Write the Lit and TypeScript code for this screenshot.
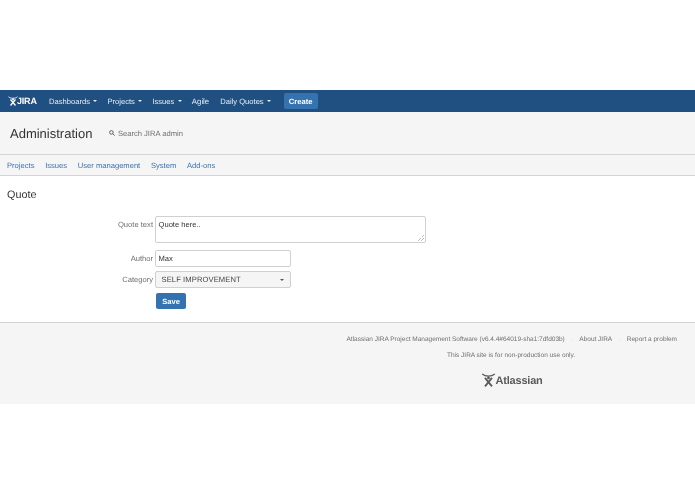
import { LitElement, html, css, svg } from "lit";
import { customElement } from "lit/decorators.js";

const caret = html`<span class="caret"></span>`;
const mark = (c: string) => svg`<svg class="mark" viewBox="0 0 20 20" fill="none" stroke="${c}">
  <path d="M1 1.500 C4 4 6 4.500 10 4.500 C14 4.500 16 4 19 1.500" stroke-width="1.800"/>
  <path d="M5 7 L15 19 M15 7 L5 19" stroke-width="2.600"/>
  <circle cx="10" cy="7" r="2" fill="${c}" stroke="none"/>
</svg>`;

@customElement("app-root")
export class AppRoot extends LitElement {
  static styles = css`
    :host { display: block; width: 695px; height: 494px; background: #fff; font-family: "Liberation Sans", Arial, sans-serif; color: #333; font-size: 7.6px; overflow: hidden; text-rendering: geometricPrecision; filter: blur(0.25px); }
    .spacer { height: 90px; }
    header { height: 22px; background: #205081; color: #fff; display: flex; align-items: center; padding-left: 7.500px; box-sizing: border-box; }
    .logo { display: flex; align-items: center; width: 41.500px; font-size: 9px; font-weight: 700; letter-spacing: -0.2px; }
    .logo .mark { width: 10px; height: 12px; margin: -1px -0.500px 0 0; }
    .navitem { display: flex; align-items: center; margin-right: 10px; color: #e8edf3; }
    .navitem.plain { font-size: 7.800px; margin-right: 11px; }
    .caret { display: inline-block; width: 0; height: 0; border-left: 2px solid transparent; border-right: 2px solid transparent; border-top: 2px solid currentColor; margin-left: 3.500px; }
    .create { margin-left: 2.500px; height: 16px; width: 34px; display: flex; align-items: center; justify-content: center; border-radius: 2px; background: #3572b0; font-weight: 700; color: #fff; }
    .admin { height: 42px; background: #f5f5f5; border-bottom: 1px solid #d4d4d4; display: flex; align-items: center; padding: 0 10px; }
    h1 { font-size: 13px; font-weight: 400; margin: 0 16.500px 0 0; color: #333; }
    .search { display: flex; align-items: center; gap: 3px; color: #707070; font-size: 7.600px; }
    .search svg { width: 6px; height: 6px; }
    .tabs { height: 20px; background: #f5f5f5; border-bottom: 1px solid #d4d4d4; display: flex; align-items: center; padding-left: 7px; gap: 10.700px; color: #3b73af; }
    main { height: 146px; box-sizing: border-box; padding: 13px 0 0 7px; }
    h2 { font-size: 10.800px; font-weight: 400; margin: 0; line-height: 13px; color: #333; }
    form { margin: 14px 0 0 -7px; display: grid; grid-template-columns: 153px auto; column-gap: 2px; row-gap: 7px; justify-content: start; align-items: start; }
    label { text-align: right; color: #707070; line-height: 15px; }
    .lab-ta { margin-top: 0.500px; }
    .ta { box-sizing: border-box; width: 271px; height: 27px; border: 1px solid #d0d0d0; border-radius: 2px; font: inherit; padding: 2.500px 2.500px; color: #333; resize: none; display: block; line-height: 9px; outline: none; background: linear-gradient(135deg, transparent 50%, #bbb 50%, #bbb 58%, transparent 58%, transparent 72%, #bbb 72%, #bbb 82%, transparent 82%) no-repeat right 1px bottom 1px / 6px 6px, #fff; }
    .in { box-sizing: border-box; width: 135.500px; height: 17px; border: 1px solid #d0d0d0; border-radius: 2px; padding: 0 2.500px; display: flex; align-items: center; background: #fff; color: #333; }
    .sel { box-sizing: border-box; width: 135.500px; height: 17px; margin-top: -3px; border: 1px solid #d0d0d0; border-radius: 2px; padding: 0 5.500px; display: flex; align-items: center; justify-content: space-between; background: #f5f5f5; color: #444; letter-spacing: 0.1px; }
    .sel .caret { color: #555; }
    .lab-sel { margin-top: -2px; }
    .lab-in { line-height: 17px; }
    .save { box-sizing: border-box; margin: -2px 0 0 1px; width: 30px; height: 16px; background: #3572b0; border-radius: 2px; color: #fff; font-weight: 700; display: flex; align-items: center; justify-content: center; }
    footer { height: 82px; box-sizing: border-box; background: #f5f5f5; border-top: 1px solid #d4d4d4; color: #707070; font-size: 6.500px; display: flex; flex-direction: column; }
    .links { display: flex; justify-content: flex-end; padding: 13px 18px 0 0; height: 8px; line-height: 8px; }
    .dot { margin: 0 6.200px; color: #bbb; }
    .np { margin: 8px 0 0 447px; line-height: 8px; }
    .atl { display: flex; align-items: center; margin: 14px 0 0 481px; color: #5a5a5a; font-size: 11px; font-weight: 700; line-height: 14px; letter-spacing: -0.2px; }
    .atl .mark { width: 15px; height: 14px; margin: -2px -0.500px 0 0; }
  `;

  render() {
    return html`
      <div class="spacer"></div>
      <header>
        <div class="logo">${mark("#fff")}<span>JIRA</span></div>
        <div class="navitem">Dashboards${caret}</div>
        <div class="navitem">Projects${caret}</div>
        <div class="navitem">Issues${caret}</div>
        <div class="navitem plain">Agile</div>
        <div class="navitem">Daily Quotes${caret}</div>
        <div class="create">Create</div>
      </header>
      <div class="admin">
        <h1>Administration</h1>
        <div class="search">
          <svg viewBox="0 0 10 10" fill="none" stroke="#555" stroke-width="1.500"><circle cx="4" cy="4" r="3"/><path d="M6 6l3.500 3.500"/></svg>
          <span>Search JIRA admin</span>
        </div>
      </div>
      <nav class="tabs">
        <span>Projects</span><span>Issues</span><span>User management</span><span>System</span><span>Add-ons</span>
      </nav>
      <main>
        <h2>Quote</h2>
        <form>
          <label class="lab-ta">Quote text</label>
          <textarea class="ta" .value=${"Quote here.."}></textarea>
          <label class="lab-in">Author</label>
          <div class="in">Max</div>
          <label class="lab-sel">Category</label>
          <div class="sel"><span>SELF IMPROVEMENT</span>${caret}</div>
          <span></span>
          <div class="save">Save</div>
        </form>
      </main>
      <footer>
        <div class="links">
          <span>Atlassian JIRA Project Management Software (v6.4.4#64019-sha1:7dfd03b)</span>
          <span class="dot">·</span><span>About JIRA</span>
          <span class="dot">·</span><span>Report a problem</span>
        </div>
        <div class="np">This JIRA site is for non-production use only.</div>
        <div class="atl">${mark("#5a5a5a")}<span>Atlassian</span></div>
      </footer>
    `;
  }
}
